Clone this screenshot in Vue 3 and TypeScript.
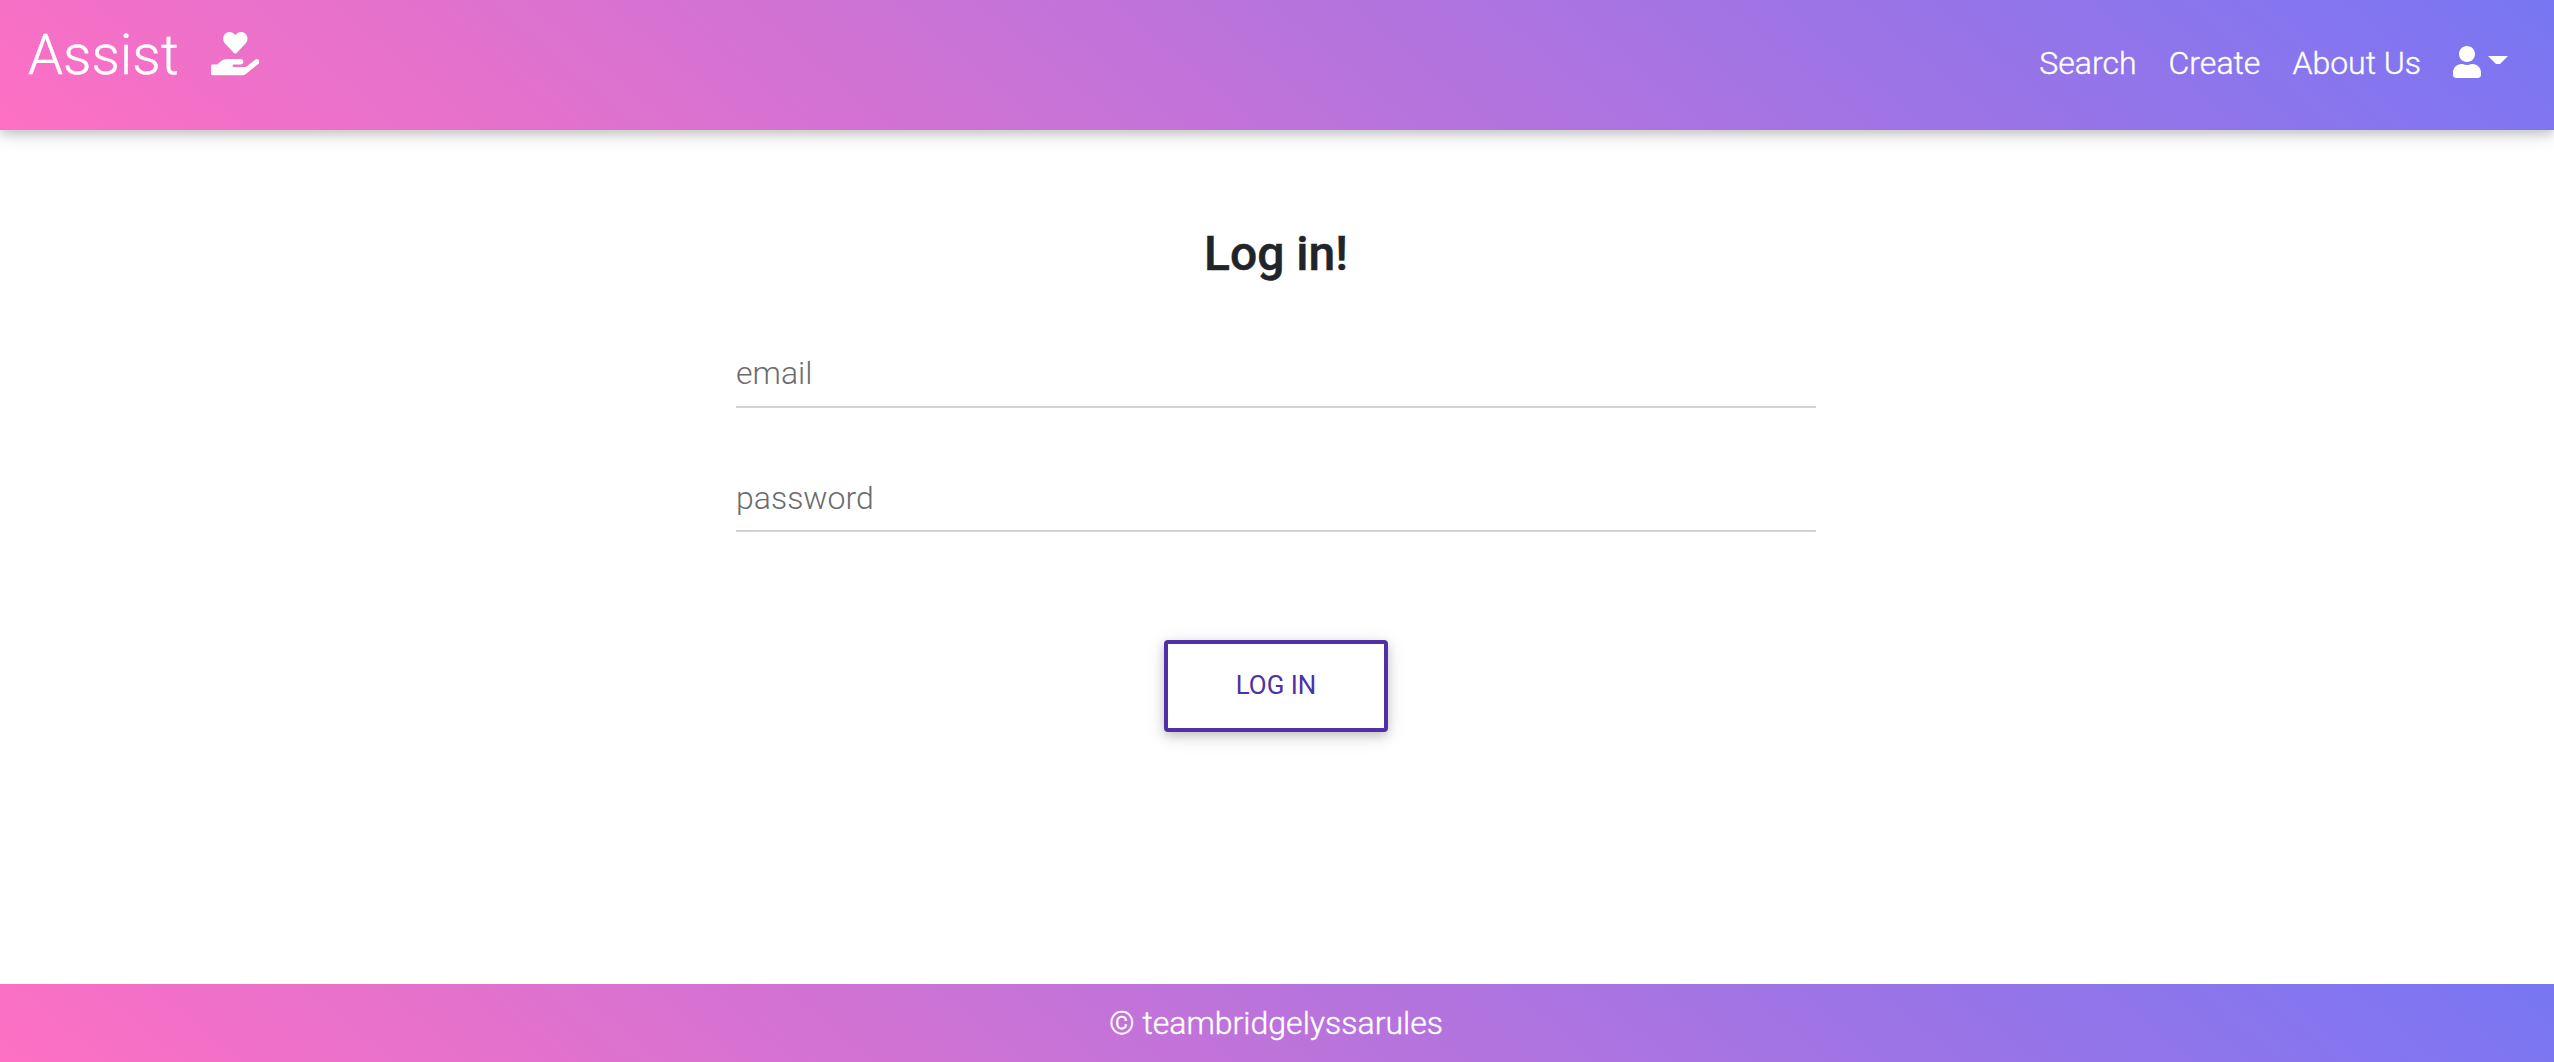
<script setup lang="ts">
import { ref } from 'vue'

const links: string[] = ['Search', 'Create', 'About Us']
const email = ref('')
const password = ref('')
</script>

<template>
  <div class="page">
    <header class="navbar gradient">
      <a class="brand">
        <span class="brand-name">Assist</span>
        <svg class="brand-icon" viewBox="0 0 576 512" aria-hidden="true">
          <path
            fill="currentColor"
            d="M275.3 250.5c7 7.4 18.4 7.4 25.5 0l108.9-114.2c31.6-33.2 29.8-88.2-5.6-118.8-30.8-26.7-76.7-21.9-104.9 7.7L288 36.9l-11.1-11.6C248.7-4.4 202.8-9.2 172 17.5c-35.3 30.6-37.2 85.6-5.6 118.8l108.9 114.2zm290 77.6c-11.8-10.7-30.2-10-42.6 0L430.3 402c-11.3 9.1-25.4 14-40 14H272c-8.8 0-16-7.2-16-16s7.2-16 16-16h78.3c15.9 0 30.7-10.9 33.3-26.6 3.3-20-12.1-37.4-31.6-37.4H192c-27 0-53.1 9.3-74.1 26.3L71.4 384H16c-8.8 0-16 7.2-16 16v96c0 8.8 7.2 16 16 16h356.8c14.5 0 28.6-4.9 40-14L564 377c15.2-12.1 16.4-35.3 1.3-48.9z"
          />
        </svg>
      </a>
      <nav class="links">
        <a v-for="link in links" :key="link" class="link">{{ link }}</a>
        <a class="account">
          <svg class="user-icon" viewBox="0 0 448 512" aria-hidden="true">
            <path
              fill="currentColor"
              d="M224 256c70.7 0 128-57.3 128-128S294.7 0 224 0 96 57.3 96 128s57.3 128 128 128zm89.6 32h-16.7c-22.2 10.2-46.9 16-72.9 16s-50.6-5.8-72.9-16h-16.7C60.2 288 0 348.2 0 422.4V464c0 26.5 21.5 48 48 48h352c26.5 0 48-21.5 48-48v-41.6c0-74.2-60.2-134.4-134.4-134.4z"
            />
          </svg>
          <svg class="caret" viewBox="0 0 20 8" aria-hidden="true">
            <path fill="currentColor" d="M0 0H20L12 8H8z" />
          </svg>
        </a>
      </nav>
    </header>

    <main class="content">
      <h1 class="title">Log in!</h1>
      <form class="form" @submit.prevent>
        <input v-model="email" class="field" type="email" placeholder="email" />
        <input
          v-model="password"
          class="field field-password"
          type="password"
          placeholder="password"
        />
        <button class="submit" type="submit">LOG IN</button>
      </form>
    </main>

    <footer class="footer gradient">© teambridgelyssarules</footer>
  </div>
</template>

<style>
body {
  margin: 0;
  background: #fff;
}
</style>

<style scoped>
.page {
  display: flex;
  flex-direction: column;
  height: 1062px;
  overflow: hidden;
  font-family: Roboto, sans-serif;
  font-size: 32px;
  font-weight: 300;
  color: #212529;
}

.gradient {
  background: linear-gradient(40deg, #fe70c3, #7876f3);
  color: #fff;
  -webkit-text-stroke: 0.4px currentColor;
}

.navbar {
  display: flex;
  flex: none;
  align-items: flex-start;
  justify-content: space-between;
  box-sizing: border-box;
  height: 130px;
  padding: 0 46px 0 28px;
  box-shadow: 0 4px 10px 0 rgba(0, 0, 0, 0.16), 0 4px 20px 0 rgba(0, 0, 0, 0.12);
}

.brand {
  display: flex;
  align-items: center;
  gap: 32px;
  height: 108px;
}

.brand-name {
  padding-top: 1px;
  font-size: 56px;
  line-height: 108px;
}

.brand-icon {
  width: 48.6px;
  height: 43.2px;
}

.links {
  display: flex;
  align-items: center;
  height: 126px;
  gap: 32px;
  line-height: 126px;
}

.account {
  display: flex;
  align-items: center;
  gap: 7px;
  padding-bottom: 2px;
}

.user-icon {
  width: 28px;
  height: 32px;
}

.caret {
  width: 20px;
  height: 8px;
  margin-bottom: 4px;
}

.content {
  flex: 1;
}

.title {
  margin: 95px 2px 0 0;
  font-size: 48px;
  font-weight: 500;
  line-height: 58px;
  text-align: center;
  -webkit-text-stroke: 0.5px currentColor;
}

.form {
  display: flex;
  flex-direction: column;
  width: 1080px;
  margin: 55px auto 0 736px;
}

.field {
  box-sizing: border-box;
  width: 100%;
  height: 70px;
  margin: 0 0 54px;
  padding: 2px 0 0;
  border: 0;
  border-bottom: 2px solid #ced4da;
  border-radius: 0;
  outline: 0;
  background: transparent;
  font: inherit;
  color: #495057;
}

.field-password {
  padding-top: 4px;
}

.field::placeholder {
  color: #6c6c6c;
  opacity: 1;
}

.submit {
  align-self: center;
  box-sizing: border-box;
  width: 224px;
  height: 92px;
  margin-top: 54px;
  padding: 0 0 2px;
  border: 4px solid #4f30a6;
  border-radius: 4px;
  background: #fff;
  box-shadow: 0 4px 10px 0 rgba(0, 0, 0, 0.16), 0 4px 20px 0 rgba(0, 0, 0, 0.12);
  font: 400 25.92px Roboto, sans-serif;
  color: #4f30a6;
}

.footer {
  box-sizing: border-box;
  flex: none;
  height: 78px;
  padding-right: 2px;
  line-height: 78px;
  text-align: center;
}
</style>
